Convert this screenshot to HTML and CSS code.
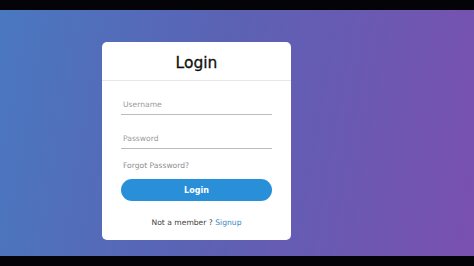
FILE: index.html
```html
<!DOCTYPE html>
<html>
<head>
<meta charset="utf-8">
<link rel="stylesheet" href="styles.css">
</head>
<body>
<div class="bar"></div>
<main class="stage">
  <div class="card">
    <div class="card-head">Login</div>
    <form class="card-body">
      <div class="field"><input type="text" placeholder="Username"></div>
      <div class="field"><input type="password" placeholder="Password"></div>
      <a class="forgot">Forgot Password?</a>
      <button type="button" class="btn">Login</button>
      <p class="signup">Not a member ? <a>Signup</a></p>
    </form>
  </div>
</main>
<div class="bar"></div>
</body>
</html>
```
FILE: styles.css
```css
html, body {
  margin: 0;
  padding: 0;
  width: 474px;
  height: 266px;
  overflow: hidden;
  background: #000;
  font-family: "DejaVu Sans", "Liberation Sans", sans-serif;
}
.bar {
  height: 10px;
  background: #030308;
}
.stage {
  height: 246px;
  box-sizing: border-box;
  padding: 32px 0 0 102px;
  background: linear-gradient(100deg, #4a78c0 0%, #5b62b4 45%, #7a50b0 100%);
  display: flex;
  align-items: flex-start;
}
.card {
  width: 189px;
  height: 198px;
  background: #fff;
  border-radius: 5px;
  display: flex;
  flex-direction: column;
}
.card-head {
  height: 39px;
  box-sizing: border-box;
  border-bottom: 1px solid #e6e6e6;
  display: flex;
  align-items: center;
  justify-content: center;
  font-size: 15.5px;
  color: #111;
  -webkit-text-stroke: 0.3px #111;
  padding-top: 3px;
}
.card-body {
  margin: 0;
  padding: 13px 19px 0 19px;
  display: flex;
  flex-direction: column;
}
.field {
  height: 20px;
  border-bottom: 1.5px solid #bcbcbc;
  margin-bottom: 13px;
  display: flex;
  align-items: center;
}
.field input {
  border: 0;
  outline: 0;
  background: transparent;
  padding: 0 0 0 2px;
  width: 100%;
  font-family: inherit;
  font-size: 7.6px;
  color: #333;
}
.field input::placeholder {
  color: #9a9a9a;
}
.forgot {
  font-size: 7.6px;
  color: #8e8e8e;
  padding-left: 2px;
  line-height: 10px;
  margin-top: -1px;
}
.btn {
  margin-top: 8px;
  height: 22px;
  border: 0;
  border-radius: 11px;
  background: #2a8fd9;
  color: #fff;
  font-family: inherit;
  font-weight: bold;
  font-size: 8px;
  padding: 0;
}
.signup {
  margin: 17px 0 0 0;
  text-align: center;
  font-size: 7.6px;
  color: #444;
  line-height: 10px;
}
.signup a {
  color: #3a87c4;
}
```
